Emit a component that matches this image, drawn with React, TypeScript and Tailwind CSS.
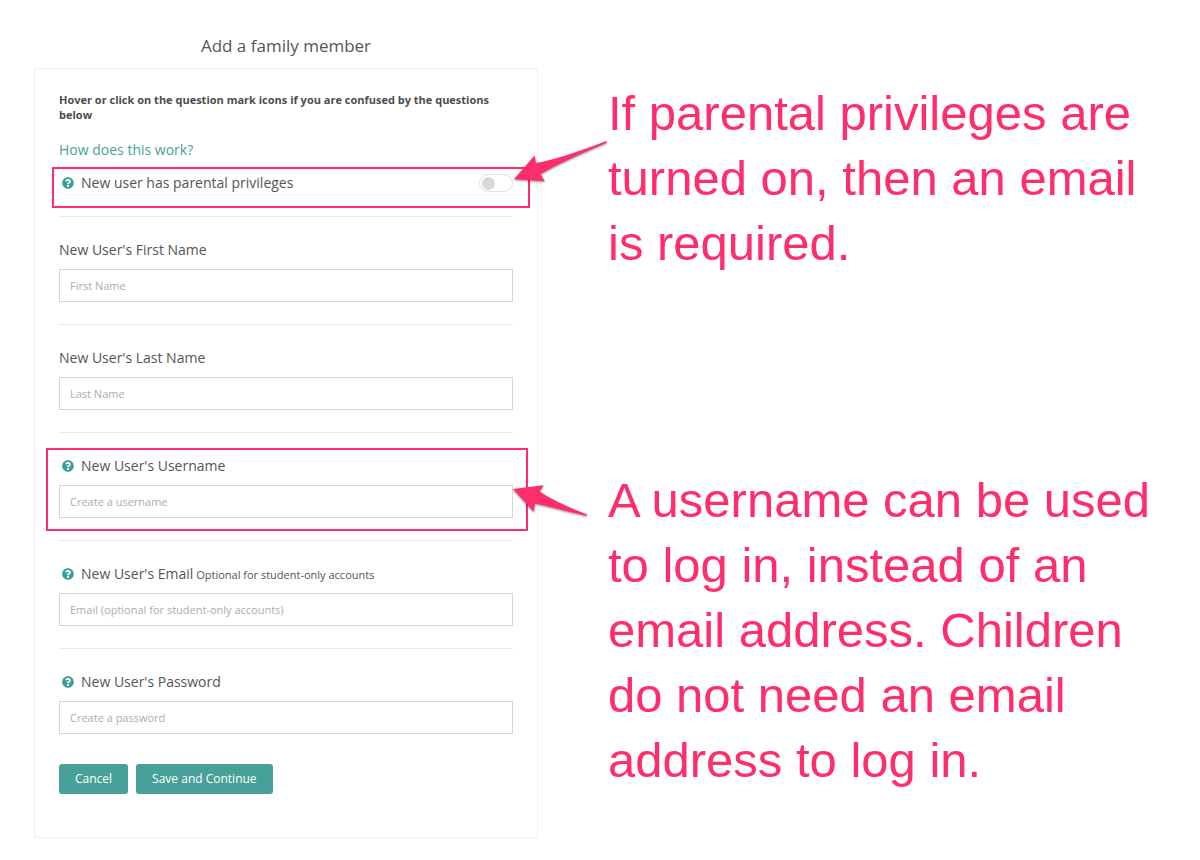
import React, { useState } from "react";
import { FaQuestionCircle } from "react-icons/fa";

interface IField {
  id: string;
  label: string;
  placeholder: string;
  type: string;
  hasHelp?: boolean;
  note?: string;
  highlighted?: boolean;
}

const fields: IField[] = [
  {
    id: "firstName",
    label: "New User's First Name",
    placeholder: "First Name",
    type: "text",
  },
  {
    id: "lastName",
    label: "New User's Last Name",
    placeholder: "Last Name",
    type: "text",
  },
  {
    id: "username",
    label: "New User's Username",
    placeholder: "Create a username",
    type: "text",
    hasHelp: true,
    highlighted: true,
  },
  {
    id: "email",
    label: "New User's Email",
    placeholder: "Email (optional for student-only accounts)",
    type: "email",
    hasHelp: true,
    note: "Optional for student-only accounts",
  },
  {
    id: "password",
    label: "New User's Password",
    placeholder: "Create a password",
    type: "password",
    hasHelp: true,
  },
];

const HelpIcon = () => (
  <FaQuestionCircle className="ml-[3px] mr-[7px] h-3 w-3 shrink-0 text-[#3b9f95]" />
);

const PrivilegesArrow = () => (
  <svg
    className="pointer-events-none absolute left-full -top-9 h-12 w-24 drop-shadow-[0_1px_1px_rgba(0,0,0,0.45)]"
    viewBox="0 0 96 48"
    fill="#ff2d6b"
    aria-hidden="true"
  >
    <path d="M1 42.3 L21.7 18.6 L22.9 26 Q45 22.500 93 4.200 Q94.500 4.900 93.500 6 Q50 24 27.600 37 L31.700 44.300 Z" />
  </svg>
);

const UsernameArrow = () => (
  <svg
    className="pointer-events-none absolute left-full top-6 h-9 w-20 drop-shadow-[0_1px_1px_rgba(0,0,0,0.45)]"
    viewBox="0 0 80 36"
    fill="#ff2d6b"
    aria-hidden="true"
  >
    <path d="M0 9 L30.700 5.300 L26.600 11.400 Q42 22 74 34.500 Q74.500 36 72.800 35.800 Q40 27.500 22 23.500 L20.700 31.700 Z" />
  </svg>
);

const FormField = ({ field }: { field: IField }) => {
  return (
    <div className="border-t border-[#ebebeb] pt-[23px] pb-[22px]">
      <div className="relative">
        {field.highlighted && (
          <div className="pointer-events-none absolute -top-2 -right-[15px] -bottom-[13px] -left-[13px] border-2 border-[#ff2d6b]" />
        )}
        <label
          htmlFor={field.id}
          className="mb-[9px] flex h-5 items-center text-sm leading-5"
        >
          {field.hasHelp && <HelpIcon />}
          <span>
            {field.label}
            {field.note && <span className="text-[11px]"> {field.note}</span>}
          </span>
        </label>
        <input
          id={field.id}
          type={field.type}
          placeholder={field.placeholder}
          className="block h-[33px] w-full border border-[#d5d5d5] bg-white px-[10px] text-[11px] outline-none placeholder:text-[#adadad]"
        />
        {field.highlighted && <UsernameArrow />}
      </div>
    </div>
  );
};

const App = () => {
  const [hasPrivileges, setHasPrivileges] = useState(false);

  return (
    <div className="grid min-h-screen grid-cols-[504fr_558fr] gap-[70px] bg-white px-[34px] pb-[22px] font-['Open_Sans',sans-serif] text-[#555555]">
      <main className="min-w-0">
        <h1 className="pt-[34px] pb-[10px] text-center text-[17px] leading-6">
          Add a family member
        </h1>

        <form
          className="border border-[#f0f0f0] px-6 pt-[23px] pb-[43px]"
          onSubmit={(e) => e.preventDefault()}
        >
          <p className="text-[11px] leading-[15px] font-bold text-[#4d4d4d]">
            Hover or click on the question mark icons if you are confused by the
            questions below
          </p>
          <a
            href="#how"
            className="mt-[18px] block text-sm leading-5 text-[#45a399]"
          >
            How does this work?
          </a>

          <div className="relative mt-[13px] mb-[23px] flex h-5 items-center justify-between">
            <div className="pointer-events-none absolute -top-[6px] -right-[17px] -bottom-[15px] -left-[7px] border-2 border-[#ff2d6b]" />
            <label
              htmlFor="privileges"
              className="flex items-center text-sm leading-5"
            >
              <HelpIcon />
              New user has parental privileges
            </label>
            <input
              id="privileges"
              type="checkbox"
              role="switch"
              checked={hasPrivileges}
              onChange={() => setHasPrivileges(!hasPrivileges)}
              className="flex h-[18px] w-[34px] cursor-pointer appearance-none items-center rounded-full border border-[#e0e0e0] bg-white px-[2px] before:h-[13px] before:w-[13px] before:rounded-full before:bg-[#d8d8d8] checked:justify-end checked:before:bg-[#45a399]"
            />
            <PrivilegesArrow />
          </div>

          {fields.map((field) => (
            <FormField key={field.id} field={field} />
          ))}

          <div className="mt-2 flex gap-2">
            <button
              type="button"
              className="h-[30px] rounded-[3px] bg-[#47a198] px-4 text-xs text-white"
            >
              Cancel
            </button>
            <button
              type="submit"
              className="h-[30px] rounded-[3px] bg-[#47a198] px-4 text-xs text-white"
            >
              Save and Continue
            </button>
          </div>
        </form>
      </main>

      <aside className="min-w-0 pt-[81px] font-['Liberation_Sans',sans-serif] text-[49px] leading-[65px] text-[#ff2d6b]">
        <p>
          If parental privileges are turned on, then an email is required.
        </p>
        <p className="mt-48">
          A username can be used to log in, instead of an email address.
          Children do not need an email address to log in.
        </p>
      </aside>
    </div>
  );
};

export default App;
